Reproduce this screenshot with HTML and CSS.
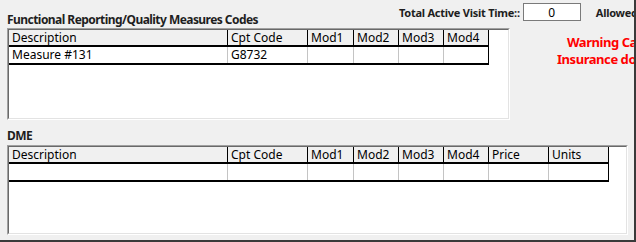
FILE: index.html
```html
<!DOCTYPE html>
<html lang="en">
<head>
    <meta charset="UTF-8">
    <title>Functional Reporting</title>
    <link rel="stylesheet" href="styles.css">
</head>
<body>
<div class="form">
    <div class="top">
        <h3 class="title">Functional Reporting/Quality Measures Codes</h3>
        <div class="visit">
            <span class="lbl">Total Active Visit Time::</span>
            <input type="text" class="num" value="0">
            <span class="lbl allowed">Allowed Time</span>
        </div>
    </div>
    <div class="mid">
        <div class="box box1">
            <div class="inner">
                <div class="grid g1">
                    <div class="hd">Description</div>
                    <div class="hd">Cpt Code</div>
                    <div class="hd">Mod1</div>
                    <div class="hd">Mod2</div>
                    <div class="hd">Mod3</div>
                    <div class="hd">Mod4</div>
                    <div class="cell">Measure #131</div>
                    <div class="cell">G8732</div>
                    <div class="cell"></div>
                    <div class="cell"></div>
                    <div class="cell"></div>
                    <div class="cell"></div>
                </div>
            </div>
        </div>
        <div class="warn">
            <p class="w1">Warning Cap</p>
            <p class="w2">Insurance does</p>
        </div>
    </div>
    <h3 class="title dme">DME</h3>
    <div class="box box2">
        <div class="inner">
            <div class="grid g2">
                <div class="hd">Description</div>
                <div class="hd">Cpt Code</div>
                <div class="hd">Mod1</div>
                <div class="hd">Mod2</div>
                <div class="hd">Mod3</div>
                <div class="hd">Mod4</div>
                <div class="hd">Price</div>
                <div class="hd">Units</div>
                <div class="cell"></div>
                <div class="cell"></div>
                <div class="cell"></div>
                <div class="cell"></div>
                <div class="cell"></div>
                <div class="cell"></div>
                <div class="cell"></div>
                <div class="cell"></div>
            </div>
        </div>
    </div>
</div>
</body>
</html>
```

FILE: styles.css
```css
*{
    box-sizing: border-box;
}
body,h3,p{
    margin: 0;
    padding: 0;
}
body{
    width: 636px;
    height: 242px;
    overflow: hidden;
    background-color: #f0f0f0;
    font-family: "Noto Sans", "Open Sans", sans-serif;
    font-size: 12px;
    color: #000;
}
.form{
    width: 636px;
    height: 242px;
    padding-left: 7px;
    border-right: 2px solid #3a3a3a;
    border-bottom: 2px solid #3a3a3a;
    overflow: hidden;
}
.top{
    display: flex;
    height: 28px;
    white-space: nowrap;
}
.title{
    flex: none;
    width: 392px;
    align-self: flex-end;
    font-size: 12px;
    font-weight: bold;
    line-height: 16px;
    letter-spacing: -0.55px;
    color: #1e1e1e;
}
.visit{
    flex: none;
    display: flex;
    align-items: center;
    padding-top: 3px;
    height: 21px;
}
.lbl{
    font-size: 11px;
    font-weight: bold;
    letter-spacing: -0.25px;
    color: #1e1e1e;
}
.num{
    width: 58px;
    height: 18px;
    margin: 0 0 0 3px;
    padding: 0;
    border: 1px solid #7a7a7a;
    background-color: #fff;
    font-family: "Noto Sans", sans-serif;
    font-size: 12px;
    text-align: center;
    color: #000;
}
.allowed{
    margin-left: 15px;
}
.mid{
    display: flex;
    height: 92px;
}
.box{
    border-top: 1px solid #a0a0a0;
    border-left: 1px solid #a0a0a0;
    border-right: 1px solid #fff;
    border-bottom: 1px solid #fff;
}
.box .inner{
    height: 100%;
    background-color: #fff;
    border-top: 1px solid #696969;
    border-left: 1px solid #696969;
    border-right: 1px solid #e3e3e3;
    border-bottom: 1px solid #e3e3e3;
}
.box1{
    flex: none;
    width: 503px;
}
.box2{
    width: 621px;
    height: 90px;
}
.grid{
    display: grid;
    grid-template-rows: 17px 16px;
    border-bottom: 2px solid #000;
}
.g1{
    width: 480px;
    grid-template-columns: 219px 80px 46px 45px 45px 45px;
}
.g2{
    width: 600px;
    grid-template-columns: 219px 80px 46px 45px 45px 45px 60px 60px;
}
.hd{
    background-color: #f0f0f0;
    border-right: 1px solid #000;
    border-bottom: 2px solid #000;
    padding-left: 3px;
    line-height: 15px;
    white-space: nowrap;
    overflow: hidden;
}
.cell{
    border-right: 1px solid #c4c4c4;
    padding-left: 3px;
    line-height: 15px;
    white-space: nowrap;
}
.grid .cell:last-child{
    border-right-color: #000;
}
.warn{
    flex: 1;
    padding-top: 6px;
    white-space: nowrap;
    overflow: hidden;
    color: #f00;
    font-weight: bold;
    font-size: 13px;
    line-height: 17px;
    letter-spacing: -0.45px;
}
.w1{
    padding-left: 57px;
}
.w2{
    padding-left: 47px;
}
.dme{
    width: auto;
    height: 25px;
    padding-top: 8px;
}
```
